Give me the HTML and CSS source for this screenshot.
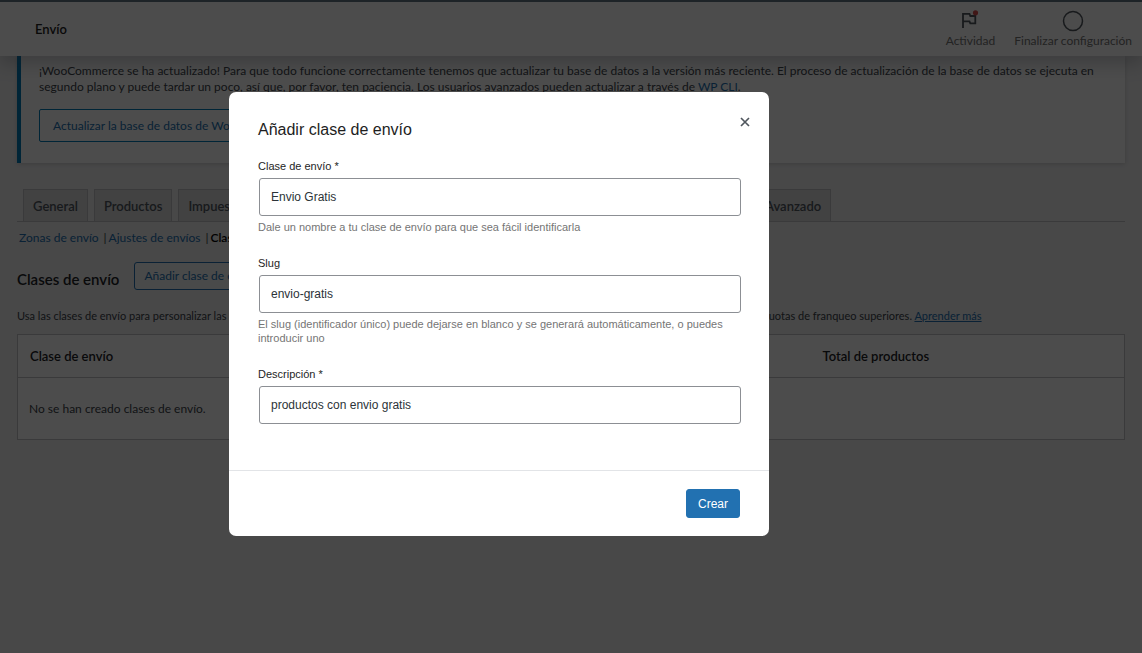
FILE: index.html
```html
<!DOCTYPE html>
<html lang="es">
<head>
<meta charset="utf-8">
<meta name="viewport" content="width=device-width, initial-scale=1">
<title>Envío</title>
<link rel="stylesheet" href="styles.css">
</head>
<body>
<div class="adminbar"></div>
<header class="topbar">
  <h1 class="topbar-title">Envío</h1>
  <div class="topbar-actions">
    <button class="action" type="button">
      <svg class="action-icon" viewBox="0 0 24 24" width="24" height="24" aria-hidden="true">
        <path d="M5 19V4.8h6.5l.8 2.2h5v7.4h-5l-.8-2H5" fill="none" stroke="#50575e" stroke-width="1.8"/>
        <circle cx="17.5" cy="3.8" r="2.6" fill="#d94f4f"/>
      </svg>
      <span>Actividad</span>
    </button>
    <button class="action" type="button">
      <svg class="action-icon" viewBox="0 0 24 24" width="24" height="24" aria-hidden="true">
        <circle cx="12" cy="12" r="9.5" fill="none" stroke="#50575e" stroke-width="1.5"/>
      </svg>
      <span>Finalizar configuración</span>
    </button>
  </div>
</header>

<main class="content">
  <section class="notice">
    <p class="notice-text">¡WooCommerce se ha actualizado! Para que todo funcione correctamente tenemos que actualizar tu base de datos a la versión más reciente. El proceso de actualización de la base de datos se ejecuta en segundo plano y puede tardar un poco, así que, por favor, ten paciencia. Los usuarios avanzados pueden actualizar a través de <a class="link" href="#">WP CLI</a>.</p>
    <button class="btn-outline btn-notice" type="button">Actualizar la base de datos de WooCommerce</button>
  </section>

  <nav class="tabs">
    <a class="tab" href="#">General</a>
    <a class="tab" href="#">Productos</a>
    <a class="tab" href="#">Impuestos</a>
    <a class="tab tab-active" href="#">Envío</a>
    <a class="tab" href="#">Pagos</a>
    <a class="tab" href="#">Cuentas, privacidad</a>
    <a class="tab" href="#">Correos electrónicos</a>
    <a class="tab" href="#">Integración</a>
    <a class="tab" href="#">Avanzado</a>
  </nav>

  <nav class="subnav">
    <a class="link" href="#">Zonas de envío</a><span class="subnav-sep">|</span><a class="link" href="#">Ajustes de envíos</a><span class="subnav-sep">|</span><a class="subnav-current" href="#">Clases de envío</a>
  </nav>

  <div class="heading">
    <h2 class="heading-title">Clases de envío</h2>
    <button class="btn-outline btn-small" type="button">Añadir clase de envío</button>
  </div>
  <p class="help">Usa las clases de envío para personalizar las tarifas de envío para los diferentes grupos de productos, como por ejemplo artículos pesados que requieren las cuotas de franqueo superiores. <a class="link link-underlined" href="#">Aprender más</a></p>

  <table class="classes">
    <thead>
      <tr><th>Clase de envío</th><th>Slug</th><th>Descripción</th><th>Total de productos</th></tr>
    </thead>
    <tbody>
      <tr><td colspan="4">No se han creado clases de envío.</td></tr>
    </tbody>
  </table>
</main>

<div class="backdrop">
  <form class="modal" role="dialog" aria-labelledby="modal-title">
    <div class="modal-header">
      <h2 class="modal-title" id="modal-title">Añadir clase de envío</h2>
      <button class="modal-close" type="button" aria-label="Cerrar">
        <svg viewBox="0 0 10 10" width="10" height="10" aria-hidden="true"><path d="M1 1l8 8M9 1l-8 8" stroke="#50575e" stroke-width="1.7" fill="none"/></svg>
      </button>
    </div>
    <div class="modal-body">
      <div class="field">
        <label class="field-label" for="class-name">Clase de envío *</label>
        <input class="field-input" id="class-name" type="text" value="Envio Gratis">
        <p class="field-help">Dale un nombre a tu clase de envío para que sea fácil identificarla</p>
      </div>
      <div class="field">
        <label class="field-label" for="class-slug">Slug</label>
        <input class="field-input" id="class-slug" type="text" value="envio-gratis">
        <p class="field-help">El slug (identificador único) puede dejarse en blanco y se generará automáticamente, o puedes introducir uno</p>
      </div>
      <div class="field">
        <label class="field-label" for="class-description">Descripción *</label>
        <input class="field-input" id="class-description" type="text" value="productos con envio gratis">
      </div>
    </div>
    <div class="modal-footer">
      <button class="btn-primary" type="submit">Crear</button>
    </div>
  </form>
</div>
</body>
</html>
```

FILE: styles.css
```css
* {
  box-sizing: border-box;
}

body {
  margin: 0;
  min-height: 100vh;
  background: #f0f0f1;
  color: #3c434a;
  font-family: Lato, "Noto Sans", sans-serif;
  font-size: 12px;
  line-height: 16px;
}

h1, h2, p {
  margin: 0;
}

button {
  font: inherit;
  cursor: pointer;
}

.link {
  color: #2271b1;
  text-decoration: none;
}

.link-underlined {
  text-decoration: underline;
}

/* Lower edge of the admin bar, stays above the backdrop */
.adminbar {
  position: relative;
  z-index: 2;
  height: 2px;
  background: #1d2327;
}

/* Top bar */
.topbar {
  position: relative;
  display: flex;
  align-items: center;
  justify-content: space-between;
  height: 54px;
  padding: 0 2px 0 35px;
  background: #fff;
  box-shadow: 0 8px 16px rgba(85, 93, 102, 0.3);
}

.topbar-title {
  color: #1e1e1e;
  font-size: 13px;
  font-weight: 600;
}

.topbar-actions {
  display: flex;
  gap: 3px;
}

.action {
  display: flex;
  flex-direction: column;
  align-items: center;
  padding: 0 8px;
  border: 0;
  background: none;
  color: #757575;
  font-size: 12px;
}

/* Page content */
.content {
  padding: 0 17px;
}

.notice {
  padding: 7px 18px 21px;
  border-left: 4px solid #007cba;
  background: #fff;
  box-shadow: 0 1px 4px rgba(0, 0, 0, 0.15);
}

.btn-outline {
  border: 1px solid #2271b1;
  border-radius: 3px;
  background: #f6f7f7;
  color: #2271b1;
}

.btn-notice {
  height: 33px;
  margin-top: 14px;
  padding: 0 13px;
  border-color: #007cba;
  border-radius: 2px;
  background: #fff;
}

.tabs {
  display: flex;
  gap: 6px;
  margin-top: 26px;
  padding: 0 6px;
  border-bottom: 1px solid #c3c4c7;
}

.tab {
  padding: 8px 9px 7px;
  border: 1px solid #c3c4c7;
  border-bottom: 0;
  background: #dcdcde;
  color: #50575e;
  font-size: 13px;
  font-weight: 600;
  white-space: nowrap;
  text-decoration: none;
}

.tab-active {
  background: #f0f0f1;
  color: #000;
}

.subnav {
  display: flex;
  margin-top: 8px;
  padding-left: 2px;
}

.subnav-sep {
  padding: 0 2px 0 5px;
}

.subnav-current {
  color: #000;
  font-weight: 600;
  text-decoration: none;
}

.heading {
  display: flex;
  align-items: center;
  gap: 15px;
  margin-top: 16px;
}

.heading-title {
  padding-top: 6px;
  color: #1d2327;
  font-size: 15px;
  font-weight: 600;
}

.btn-small {
  height: 28px;
  padding: 0 9px;
}

.help {
  margin-top: 18px;
  font-size: 11px;
}

.classes {
  width: 100%;
  margin-top: 10px;
  border: 1px solid #c3c4c7;
  border-collapse: collapse;
  table-layout: fixed;
  background: #fff;
}

.classes th {
  height: 43px;
  padding: 0 12px;
  border-bottom: 1px solid #c3c4c7;
  color: #1d2327;
  font-size: 13px;
  font-weight: 600;
  text-align: left;
}

.classes th:nth-child(4) {
  width: 314px;
}

.classes td {
  height: 62px;
  padding: 0 11px;
}

/* Modal */
.backdrop {
  position: fixed;
  inset: 0;
  display: flex;
  align-items: center;
  justify-content: center;
  padding: 0 144px 25px 0;
  background: rgba(0, 0, 0, 0.7);
}

.modal {
  width: 540px;
  border-radius: 7px;
  background: #fff;
  font-family: "Liberation Sans", Arial, sans-serif;
}

.modal-header {
  display: flex;
  justify-content: space-between;
  padding: 20px 19px 0 29px;
}

.modal-title {
  padding-top: 8px;
  color: #1e1e1e;
  font-size: 16px;
  font-weight: 400;
  line-height: 20px;
}

.modal-close {
  display: flex;
  align-items: center;
  height: 20px;
  padding: 0;
  border: 0;
  background: none;
}

.modal-body {
  display: flex;
  flex-direction: column;
  gap: 22px;
  padding: 19px 28px 46px 29px;
}

.field {
  display: flex;
  flex-direction: column;
}

.field-label {
  color: #1e1e1e;
  font-size: 11px;
  line-height: 14px;
}

.field-input {
  height: 38px;
  margin: 5px 0 0 1px;
  padding: 0 11px;
  border: 1px solid #8c8f94;
  border-radius: 3px;
  background: #fff;
  color: #2c3338;
  font-family: inherit;
  font-size: 12px;
}

.field-help {
  margin-top: 4px;
  color: #757575;
  font-size: 11px;
  line-height: 14px;
}

.modal-footer {
  display: flex;
  justify-content: flex-end;
  padding: 18px 29px;
  border-top: 1px solid #e2e4e7;
}

.btn-primary {
  height: 29px;
  padding: 0 11px;
  border: 1px solid #2271b1;
  border-radius: 3px;
  background: #2271b1;
  color: #fff;
  font-size: 12px;
}
```
